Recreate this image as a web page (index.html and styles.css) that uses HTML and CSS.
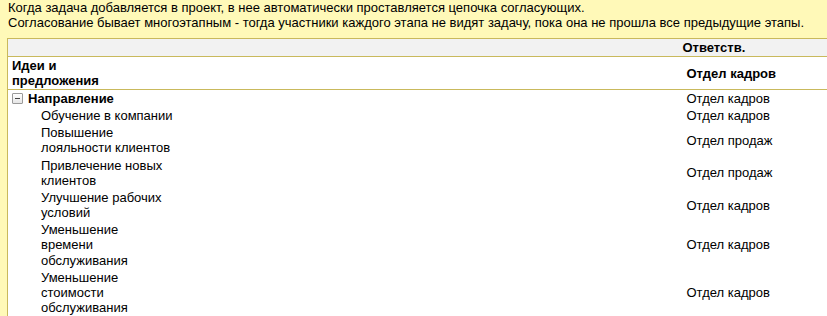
FILE: index.html
```html
<!DOCTYPE html>
<html lang="ru">
<head>
<meta charset="utf-8">
<link rel="stylesheet" href="styles.css">
</head>
<body>
<div class="note">
  <p>Когда задача добавляется в проект, в нее автоматически проставляется цепочка согласующих.</p>
  <p>Согласование бывает многоэтапным - тогда участники каждого этапа не видят задачу, пока она не прошла все предыдущие этапы.</p>
</div>
<table class="grid">
  <colgroup>
    <col class="col-name">
    <col class="col-resp">
  </colgroup>
  <thead>
    <tr class="row-caption">
      <th class="cell-name"></th>
      <th class="cell-resp cell-resp-caption">Ответств.</th>
    </tr>
    <tr class="row-project">
      <th class="cell-name">Идеи и<br>предложения</th>
      <th class="cell-resp">Отдел кадров</th>
    </tr>
  </thead>
  <tbody>
    <tr class="row-group">
      <td class="cell-name cell-group"><div class="group"><span class="toggle"></span><span>Направление</span></div></td>
      <td class="cell-resp">Отдел кадров</td>
    </tr>
    <tr>
      <td class="cell-name cell-item">Обучение в компании</td>
      <td class="cell-resp">Отдел кадров</td>
    </tr>
    <tr>
      <td class="cell-name cell-item">Повышение<br>лояльности клиентов</td>
      <td class="cell-resp">Отдел продаж</td>
    </tr>
    <tr>
      <td class="cell-name cell-item">Привлечение новых<br>клиентов</td>
      <td class="cell-resp">Отдел продаж</td>
    </tr>
    <tr>
      <td class="cell-name cell-item">Улучшение рабочих<br>условий</td>
      <td class="cell-resp">Отдел кадров</td>
    </tr>
    <tr>
      <td class="cell-name cell-item">Уменьшение<br>времени<br>обслуживания</td>
      <td class="cell-resp">Отдел кадров</td>
    </tr>
    <tr>
      <td class="cell-name cell-item">Уменьшение<br>стоимости<br>обслуживания</td>
      <td class="cell-resp">Отдел кадров</td>
    </tr>
  </tbody>
</table>
</body>
</html>
```
FILE: styles.css
```css
html, body {
  margin: 0;
  padding: 0;
  overflow: hidden;
}
body {
  background: #fff9b8;
  font-family: "Liberation Sans", Arial, sans-serif;
  font-size: 13px;
  line-height: 15px;
  color: #000;
}
.note {
  padding: 0 8px;
  height: 30px;
  margin-bottom: 8px;
}
.note p {
  margin: 0;
  white-space: nowrap;
}
.grid {
  margin-left: 7px;
  width: 900px;
  border-collapse: collapse;
  background: #fff;
  border-top: 1px solid #c9b95c;
  border-left: 1px solid #c9b95c;
}
.col-name { width: 675px; }
.grid th, .grid td {
  padding: 1px 4px;
  text-align: left;
  vertical-align: middle;
  font-weight: normal;
  white-space: nowrap;
}
.grid td { line-height: 15.15px; }
.grid thead th { font-weight: bold; }
.row-caption th {
  background: #f2f2f2;
  border-bottom: 1px solid #c9b95c;
  height: 15px;
}
.grid .cell-resp-caption { padding-left: 0; }
.row-project th {
  border-bottom: 1px solid #c9b95c;
}
.grid .row-project .cell-name { vertical-align: top; }
.grid .cell-group { font-weight: bold; }
.group {
  display: flex;
  align-items: center;
  gap: 5px;
}
.toggle {
  position: relative;
  width: 9px;
  height: 9px;
  border: 1px solid #9a9a9a;
  border-radius: 1px;
  background: linear-gradient(#ffffff, #e6e6e6);
  flex: none;
}
.toggle::after {
  content: "";
  position: absolute;
  left: 2px;
  right: 2px;
  top: 4px;
  height: 1px;
  background: #444;
}
.grid .cell-item { padding-left: 33px; }
```
